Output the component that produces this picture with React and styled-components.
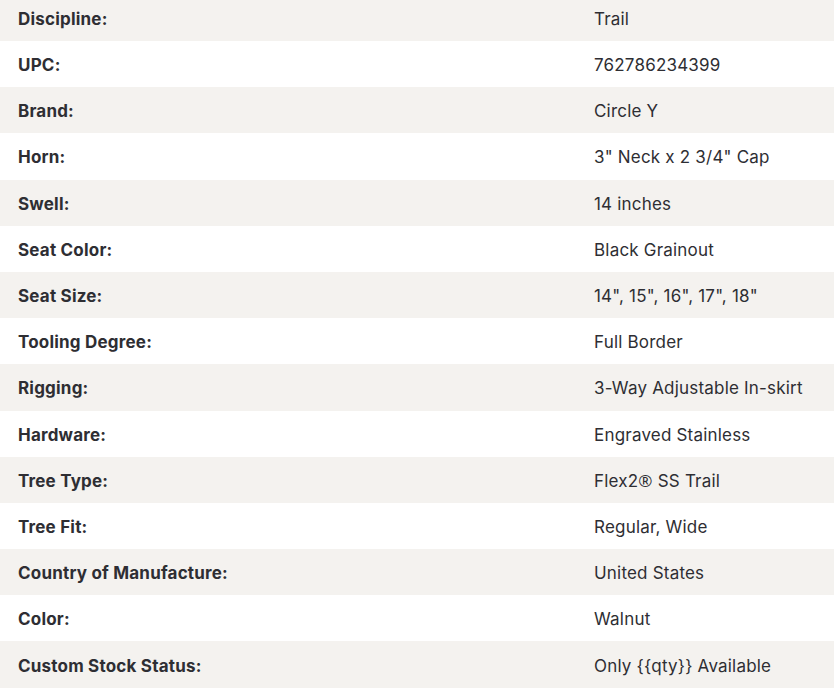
import React from "react";
import styled, { createGlobalStyle } from "styled-components";

const Global = createGlobalStyle`
  html, body { margin: 0; padding: 0; background: #ffffff; }
  body { font-family: Inter, "Open Sans", "Liberation Sans", sans-serif; }
`;

const Table = styled.div`
  display: flex;
  flex-direction: column;
  width: 834px;
  margin-top: -5.2px;
`;

const Row = styled.div`
  display: grid;
  grid-template-columns: 576px 1fr;
  height: 46.2px;
  align-items: center;
  background: ${(p) => (p.$shaded ? "#f4f2ef" : "#ffffff")};
`;

const Label = styled.div`
  padding: 2px 0 0 18px;
  font-size: 17px;
  letter-spacing: 0.2px;
  font-weight: 700;
  color: #2e2e33;
`;

const Value = styled.div`
  padding: 2px 0 0 18px;
  font-size: 17px;
  letter-spacing: 0.2px;
  font-weight: 400;
  color: #2e2e33;
`;

const Mark = styled.span`
  font-family: "Open Sans", sans-serif;
  font-size: 17px;
`;

const rows = [
  ["Discipline:", "Trail"],
  ["UPC:", "762786234399"],
  ["Brand:", "Circle Y"],
  ["Horn:", '3" Neck x 2 3/4" Cap'],
  ["Swell:", "14 inches"],
  ["Seat Color:", "Black Grainout"],
  ["Seat Size:", '14", 15", 16", 17", 18"'],
  ["Tooling Degree:", "Full Border"],
  ["Rigging:", "3-Way Adjustable In-skirt"],
  ["Hardware:", "Engraved Stainless"],
  ["Tree Type:", <>Flex2<Mark>®</Mark> SS Trail</>],
  ["Tree Fit:", "Regular, Wide"],
  ["Country of Manufacture:", "United States"],
  ["Color:", "Walnut"],
  ["Custom Stock Status:", "Only {{qty}} Available"],
];

export default function App() {
  return (
    <>
      <Global />
      <Table>
        {rows.map(([k, v], i) => (
          <Row key={k} $shaded={i % 2 === 0}>
            <Label>{k}</Label>
            <Value>{v}</Value>
          </Row>
        ))}
      </Table>
    </>
  );
}
